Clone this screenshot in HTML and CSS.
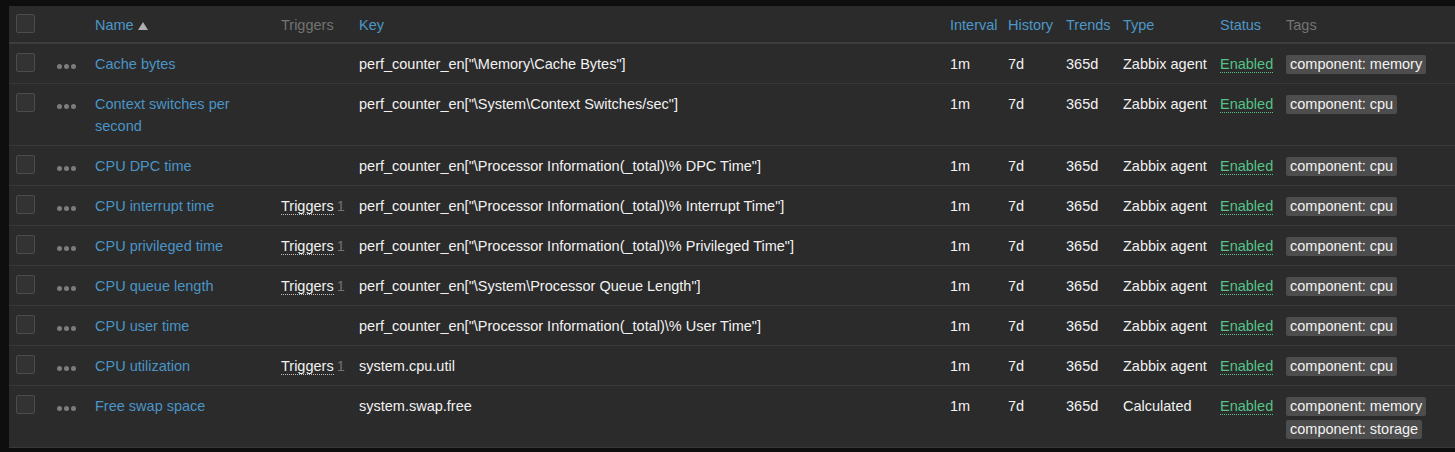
FILE: index.html
```html
<!DOCTYPE html>
<html>
<head>
<meta charset="utf-8">
<link rel="stylesheet" href="styles.css">
</head>
<body>
<table class="list">
  <colgroup>
    <col class="c-chk"><col class="c-dots"><col class="c-name"><col class="c-trig"><col class="c-key">
    <col class="c-int"><col class="c-hist"><col class="c-trend"><col class="c-type"><col class="c-status"><col class="c-tags">
  </colgroup>
  <thead>
    <tr>
      <th><span class="chk"></span></th>
      <th></th>
      <th><a class="sort">Name</a> <span class="arrow"></span></th>
      <th class="muted">Triggers</th>
      <th><a class="sort">Key</a></th>
      <th><a class="sort">Interval</a></th>
      <th><a class="sort">History</a></th>
      <th><a class="sort">Trends</a></th>
      <th><a class="sort">Type</a></th>
      <th><a class="sort">Status</a></th>
      <th class="muted">Tags</th>
    </tr>
  </thead>
  <tbody>
    <tr>
      <td><span class="chk"></span></td><td><span class="dots"><i></i><i></i><i></i></span></td>
      <td class="wrap"><a class="link">Cache bytes</a></td><td></td>
      <td>perf_counter_en["\Memory\Cache Bytes"]</td>
      <td>1m</td><td>7d</td><td>365d</td><td>Zabbix agent</td>
      <td><a class="enabled">Enabled</a></td><td><span class="tag">component: memory</span></td>
    </tr>
    <tr>
      <td><span class="chk"></span></td><td><span class="dots"><i></i><i></i><i></i></span></td>
      <td class="wrap"><a class="link">Context switches per second</a></td><td></td>
      <td>perf_counter_en["\System\Context Switches/sec"]</td>
      <td>1m</td><td>7d</td><td>365d</td><td>Zabbix agent</td>
      <td><a class="enabled">Enabled</a></td><td><span class="tag">component: cpu</span></td>
    </tr>
    <tr>
      <td><span class="chk"></span></td><td><span class="dots"><i></i><i></i><i></i></span></td>
      <td class="wrap"><a class="link">CPU DPC time</a></td><td></td>
      <td>perf_counter_en["\Processor Information(_total)\% DPC Time"]</td>
      <td>1m</td><td>7d</td><td>365d</td><td>Zabbix agent</td>
      <td><a class="enabled">Enabled</a></td><td><span class="tag">component: cpu</span></td>
    </tr>
    <tr>
      <td><span class="chk"></span></td><td><span class="dots"><i></i><i></i><i></i></span></td>
      <td class="wrap"><a class="link">CPU interrupt time</a></td><td><a class="trig">Triggers</a> <span class="cnt">1</span></td>
      <td>perf_counter_en["\Processor Information(_total)\% Interrupt Time"]</td>
      <td>1m</td><td>7d</td><td>365d</td><td>Zabbix agent</td>
      <td><a class="enabled">Enabled</a></td><td><span class="tag">component: cpu</span></td>
    </tr>
    <tr>
      <td><span class="chk"></span></td><td><span class="dots"><i></i><i></i><i></i></span></td>
      <td class="wrap"><a class="link">CPU privileged time</a></td><td><a class="trig">Triggers</a> <span class="cnt">1</span></td>
      <td>perf_counter_en["\Processor Information(_total)\% Privileged Time"]</td>
      <td>1m</td><td>7d</td><td>365d</td><td>Zabbix agent</td>
      <td><a class="enabled">Enabled</a></td><td><span class="tag">component: cpu</span></td>
    </tr>
    <tr>
      <td><span class="chk"></span></td><td><span class="dots"><i></i><i></i><i></i></span></td>
      <td class="wrap"><a class="link">CPU queue length</a></td><td><a class="trig">Triggers</a> <span class="cnt">1</span></td>
      <td>perf_counter_en["\System\Processor Queue Length"]</td>
      <td>1m</td><td>7d</td><td>365d</td><td>Zabbix agent</td>
      <td><a class="enabled">Enabled</a></td><td><span class="tag">component: cpu</span></td>
    </tr>
    <tr>
      <td><span class="chk"></span></td><td><span class="dots"><i></i><i></i><i></i></span></td>
      <td class="wrap"><a class="link">CPU user time</a></td><td></td>
      <td>perf_counter_en["\Processor Information(_total)\% User Time"]</td>
      <td>1m</td><td>7d</td><td>365d</td><td>Zabbix agent</td>
      <td><a class="enabled">Enabled</a></td><td><span class="tag">component: cpu</span></td>
    </tr>
    <tr>
      <td><span class="chk"></span></td><td><span class="dots"><i></i><i></i><i></i></span></td>
      <td class="wrap"><a class="link">CPU utilization</a></td><td><a class="trig">Triggers</a> <span class="cnt">1</span></td>
      <td>system.cpu.util</td>
      <td>1m</td><td>7d</td><td>365d</td><td>Zabbix agent</td>
      <td><a class="enabled">Enabled</a></td><td><span class="tag">component: cpu</span></td>
    </tr>
    <tr>
      <td><span class="chk"></span></td><td><span class="dots"><i></i><i></i><i></i></span></td>
      <td class="wrap"><a class="link">Free swap space</a></td><td></td>
      <td>system.swap.free</td>
      <td>1m</td><td>7d</td><td>365d</td><td>Calculated</td>
      <td><a class="enabled">Enabled</a></td><td><span class="tags"><span class="tag">component: memory</span><span class="tag">component: storage</span></span></td>
    </tr>
  </tbody>
</table>
</body>
</html>
```

FILE: styles.css
```css
html, body {
  margin: 0;
  padding: 0;
  background: #0e0e0e;
}
body {
  padding: 6px 0 0 9px;
  font-family: "Liberation Sans", Arial, sans-serif;
  font-size: 14.5px;
  color: #f2f2f2;
}
.list {
  width: 1446px;
  table-layout: fixed;
  border-collapse: collapse;
  background: #2b2b2b;
}
.c-chk { width: 41px; }
.c-dots { width: 38px; }
.c-name { width: 186px; }
.c-trig { width: 78px; }
.c-key { width: 591px; }
.c-int { width: 58px; }
.c-hist { width: 58px; }
.c-trend { width: 57px; }
.c-type { width: 97px; }
.c-status { width: 66px; }
.c-tags { width: 176px; }

th, td {
  text-align: left;
  vertical-align: top;
  padding: 9px 0 8px 7px;
  line-height: 22px;
  font-weight: normal;
  white-space: nowrap;
  overflow: visible;
}
td.wrap {
  white-space: normal;
  padding-right: 7px;
}
th {
  padding-top: 8px;
  padding-bottom: 6px;
  border-bottom: 2px solid #3d3d3d;
}
td {
  border-bottom: 1px solid #383838;
}
th.muted { color: #737373; }
.sort { color: #4d97c8; }
.arrow {
  display: inline-block;
  width: 0;
  height: 0;
  border-left: 5px solid transparent;
  border-right: 5px solid transparent;
  border-bottom: 8px solid #b0b0b0;
  vertical-align: 0;
}
.chk {
  display: block;
  width: 17px;
  height: 17px;
  border: 1px solid #4c4c4c;
  background: #333333;
  border-radius: 2px;
}
th .chk { margin-top: 0; }
.dots {
  display: flex;
  box-sizing: border-box;
  gap: 2px;
  height: 22px;
  align-items: center;
  padding-top: 4px;
}
.dots i {
  display: block;
  width: 5px;
  height: 5px;
  border-radius: 50%;
  background: #7c7c7c;
}
.link { color: #4a94c6; }
.trig {
  color: #f2f2f2;
  border-bottom: 1px dotted #bfbfbf;
}
.cnt {
  color: #737373;
  margin-left: -1px;
}
.enabled {
  color: #55c288;
  border-bottom: 1px dotted #55c288;
}
.tags {
  display: flex;
  flex-direction: column;
  align-items: flex-start;
  gap: 4px;
  padding-top: 2px;
}
td > .tag {
  display: inline-block;
  margin-top: 2px;
}
.tag {
  display: block;
  background: #4d4d4d;
  color: #f2f2f2;
  line-height: 19px;
  padding: 0 4px;
  border-radius: 2px;
  white-space: nowrap;
  vertical-align: top;
}
```
